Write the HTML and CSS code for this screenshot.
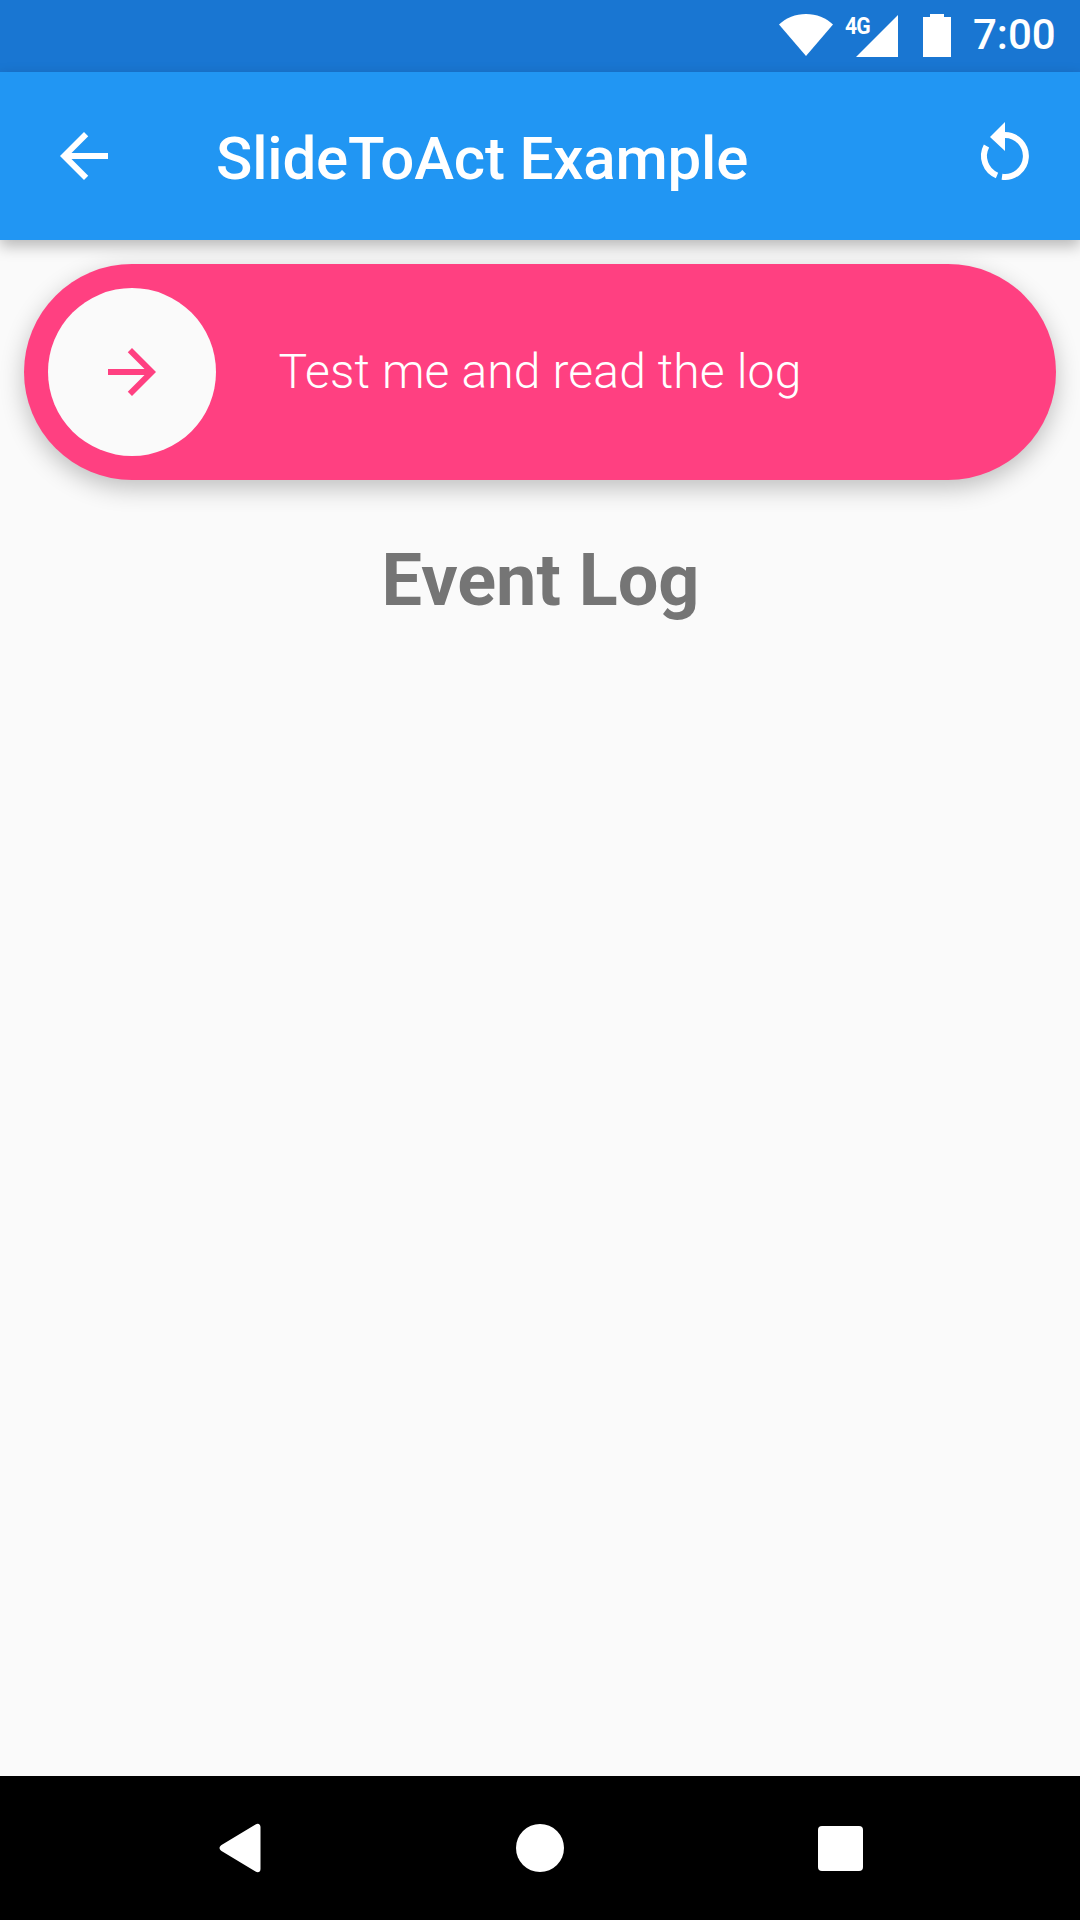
FILE: index.html
```html
<!DOCTYPE html>
<html lang="en">
<head>
  <meta charset="UTF-8">
  <meta name="viewport" content="width=device-width, initial-scale=1.0">
  <title>SlideToAct Example</title>
  <link rel="stylesheet" href="styles.css">
</head>
<body>
  <div class="screen">
    <!-- Status bar -->
    <div class="status-bar">
      <svg class="wifi-icon" viewBox="0 0 54 42"><path d="M0 10.500C7 4 16.500 0 27 0s20 4 27 10.500L27 42z"/></svg>
      <div class="signal">
        <span class="signal-label">4G</span>
        <svg class="signal-icon" viewBox="0 0 42 42"><path d="M0 42L42 0v42z"/></svg>
      </div>
      <svg class="battery-icon" viewBox="0 0 28 43"><path d="M7 3V0h14v3h7v40H0V3z"/></svg>
      <span class="clock">7:00</span>
    </div>

    <!-- App bar -->
    <header class="app-bar">
      <svg class="bar-icon" viewBox="0 0 24 24"><path d="M20 11H7.830l5.590-5.590L12 4l-8 8 8 8 1.410-1.410L7.830 13H20v-2z"/></svg>
      <h1 class="app-title">SlideToAct Example</h1>
      <svg class="bar-icon reset-icon" viewBox="0 0 72 72">
        <path class="ring" d="M36 15A21 21 0 1 1 33 56.800"/>
        <path class="ring" d="M28 55.400A21 21 0 0 1 17.500 26"/>
        <path d="M36 2L21 17l15 14z"/>
      </svg>
    </header>

    <main class="content">
      <div class="slider">
        <div class="slider-knob">
          <svg class="knob-icon" viewBox="0 0 24 24"><path d="M12 4l-1.410 1.410L16.170 11H4v2h12.170l-5.580 5.590L12 20l8-8z"/></svg>
        </div>
        <span class="slider-text">Test me and read the log</span>
      </div>
      <h2 class="log-title">Event Log</h2>
    </main>

    <!-- Navigation bar -->
    <nav class="nav-bar">
      <svg class="nav-back" viewBox="0 0 42 50"><path d="M36 1.500c2.500-1.800 5-.5 5 2.500v42c0 3-2.500 4.300-5 2.500L2 28c-2.600-1.600-2.600-4.400 0-6z"/></svg>
      <div class="nav-home"></div>
      <div class="nav-recent"></div>
    </nav>
  </div>
</body>
</html>
```

FILE: styles.css
```css
* {
  box-sizing: border-box;
  margin: 0;
  padding: 0;
}
body {
  font-family: 'Roboto', sans-serif;
  background: #fafafa;
  width: 1080px;
  height: 1920px;
  overflow: hidden;
}
svg {
  display: block;
  fill: #fff;
  flex-shrink: 0;
}
.screen {
  display: flex;
  flex-direction: column;
  height: 1920px;
}
/* Status bar */
.status-bar {
  height: 72px;
  background: #1976d2;
  display: flex;
  align-items: flex-start;
  padding: 14px 0 0 779px;
  color: #fff;
}
.wifi-icon {
  width: 54px;
  height: 42px;
}
.signal {
  position: relative;
  flex-shrink: 0;
  width: 65px;
  height: 42px;
}
.signal-icon {
  position: absolute;
  right: 0;
  top: 1px;
  width: 42px;
  height: 42px;
}
.signal-label {
  position: absolute;
  left: 12px;
  top: 0;
  font-size: 24px;
  line-height: 24px;
  font-weight: 700;
  letter-spacing: -1px;
  transform: scaleX(0.88);
  transform-origin: left top;
}
.battery-icon {
  width: 28px;
  height: 43px;
  margin-left: 25px;
}
.clock {
  margin-left: 22px;
  font-size: 42px;
  line-height: 46px;
  font-weight: 500;
  margin-top: -2px;
}
/* App bar */
.app-bar {
  height: 168px;
  background: #2196f3;
  display: flex;
  align-items: center;
  padding: 0 39px 0 48px;
  color: #fff;
  box-shadow: 0 6px 14px rgba(0,0,0,0.27);
  position: relative;
}
.bar-icon {
  width: 72px;
  height: 72px;
}
.app-title {
  flex: 1;
  margin-left: 96px;
  margin-top: 4px;
  font-size: 60px;
  font-weight: 500;
  letter-spacing: -0.17px;
}
.reset-icon .ring {
  fill: none;
  stroke: #fff;
  stroke-width: 6;
}
/* Slider */
.content {
  flex: 1;
  padding: 24px;
}
.slider {
  position: relative;
  height: 216px;
  background: #ff4081;
  border-radius: 108px;
  display: flex;
  align-items: center;
  justify-content: center;
  box-shadow: 0 8px 24px rgba(0,0,0,0.24);
}
.slider-knob {
  position: absolute;
  left: 24px;
  top: 24px;
  width: 168px;
  height: 168px;
  border-radius: 50%;
  background: #fafafa;
  display: flex;
  align-items: center;
  justify-content: center;
}
.knob-icon {
  width: 72px;
  height: 72px;
  fill: #ff4081;
}
.slider-text {
  color: #fff;
  font-size: 48px;
  font-weight: 300;
  letter-spacing: 0.14px;
  margin-top: -2px;
}
.log-title {
  margin-top: 58px;
  text-align: center;
  font-size: 72px;
  font-weight: 700;
  color: #757575;
  padding-left: 1px;
}
/* Navigation bar */
.nav-bar {
  height: 144px;
  background: #000;
  display: flex;
  align-items: center;
  padding-left: 219px;
}
.nav-back {
  width: 43px;
  height: 50px;
}
.nav-home {
  width: 48px;
  height: 48px;
  border-radius: 50%;
  background: #fff;
  margin-left: 254px;
}
.nav-recent {
  width: 45px;
  height: 45px;
  border-radius: 4px;
  background: #fff;
  margin-left: 254px;
}
```
